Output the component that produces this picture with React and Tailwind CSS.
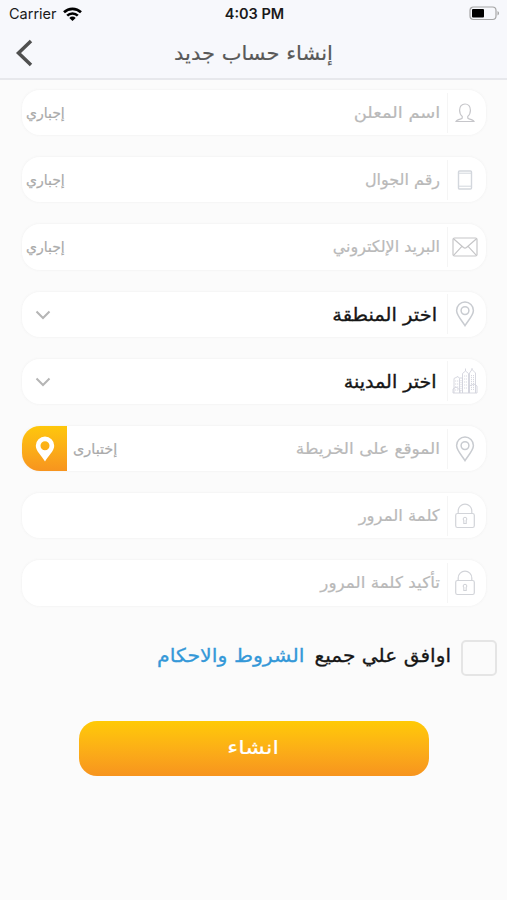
import clsx from "clsx";

function UserIcon() {
  return (
    <svg width="20" height="20" viewBox="0 0 20 20" fill="none" stroke="#c6c6ca" strokeWidth="1.2">
      <path d="M7.2 13.400C5.500 12 4.600 9.800 4.600 7.200C4.600 3.500 6.800 1 10 1s5.400 2.500 5.400 6.200c0 2.600-.9 4.800-2.600 6.200v1.800c0 .9 5.400 1 6.200 3.300H1c.8-2.300 6.200-2.400 6.200-3.300z" />
    </svg>
  );
}

function PhoneIcon() {
  return (
    <svg width="16" height="20" viewBox="0 0 16 20" fill="none" stroke="#d3d7dd" strokeWidth="1.400">
      <rect x="1.500" y="1" width="13" height="18" rx="1" />
      <path d="M1.500 3.200h13M1.500 16.200h13" strokeWidth="1" />
    </svg>
  );
}

function MailIcon() {
  return (
    <svg width="26" height="20" viewBox="0 0 26 20" fill="none" stroke="#c6c6c8" strokeWidth="1.2">
      <rect x="1" y="1" width="24" height="18" rx="1.5" />
      <path d="M1.5 1.8l10 8.7q1.5 1.2 3 0l10-8.7M1.6 18.4l8.3-9M24.4 18.4l-8.3-9" />
    </svg>
  );
}

function PinIcon() {
  return (
    <svg width="20" height="26" viewBox="0 0 20 26" fill="none" stroke="#c9ccd1" strokeWidth="1.5">
      <path d="M10 24.6C7.5 20.2 1.6 14.6 1.6 9.5a8.4 8.4 0 0 1 16.8 0c0 5.1-5.9 10.7-8.4 15.1z" />
      <circle cx="10" cy="9.6" r="3.9" />
    </svg>
  );
}

function CityIcon() {
  return (
    <svg width="26" height="26" viewBox="0 0 26 26" fill="none" stroke="#d3d4dc" strokeWidth=".9">
      <path d="M1 25h24M2 25V10.500l4-2 1.500 2V25M7.500 10h3v15M10.500 25V5.500l3-2.500 3 2.500V25M13.500 3V.5M17.500 25V5l2.500-3.500L23.500 5v20M20 2V0" />
      <path d="M3 13h3.500M3 16h3.500M3 19h3.500M3 22h3.500M9 12v11M12 8h3M12 11h3M12 14h3M12 17h3M12 20h3M19.500 7v15M21.500 7v15" strokeDasharray="1.200 .8" />
      <path d="M1 25v-4l3-2 4 3v3M17 25v-7l5-2 3 2v7" />
    </svg>
  );
}

function LockIcon() {
  return (
    <svg width="20" height="26" viewBox="0 0 20 26" fill="none" stroke="#d2d4d9" strokeWidth="1.2">
      <rect x=".7" y="10.500" width="18.600" height="14" rx="1.800" />
      <path d="M3.200 10.500V8a6.800 6.800 0 0 1 13.600 0v2.500" />
      <path d="M10 14.200a1.800 1.800 0 0 1 1.200 3.100v3.200H8.800v-3.200a1.800 1.800 0 0 1 1.200-3.100z" strokeWidth="1.100" />
    </svg>
  );
}

const fields = [
  { label: "اسم المعلن", Icon: UserIcon, note: "إجباري", stretch: "scale-x-[1.12]" },
  { label: "رقم الجوال", Icon: PhoneIcon, note: "إجباري" },
  { label: "البريد الإلكتروني", Icon: MailIcon, note: "إجباري" },
  { label: "اختر المنطقة", Icon: PinIcon, select: true, stretch: "scale-x-[1.08]" },
  { label: "اختر المدينة", Icon: CityIcon, select: true, stretch: "scale-x-[1.06]" },
  { label: "الموقع على الخريطة", Icon: PinIcon, note: "إختبارى", map: true, stretch: "scale-x-[1.06]" },
  { label: "كلمة المرور", Icon: LockIcon, stretch: "scale-x-[1.03]" },
  { label: "تأكيد كلمة المرور", Icon: LockIcon, stretch: "scale-x-[1.05]" },
];

function Field({ label, Icon, note, select, map, stretch }) {
  return (
    <div className="flex h-[45.2px] items-center overflow-hidden rounded-[18px] bg-white shadow-[0_0_2px_1px_#f5f5f5]">
      <div className="flex h-full w-[38px] shrink-0 items-center justify-center pr-[4px]">
        <Icon />
      </div>
      <div className="h-[40px] w-px shrink-0 bg-[#f5f5f5]" />
      <span
        className={clsx(
          "origin-right whitespace-nowrap",
          select
            ? "mr-[10px] text-[18px] text-[#161616] [-webkit-text-stroke:0.35px]"
            : "mr-[7px] text-[16px] text-[#b9b9b9] [-webkit-text-stroke:0.2px]",
          stretch
        )}
      >
        {label}
      </span>
      {select && (
        <svg className="mt-[2px] mr-auto ml-[13px]" width="16" height="10" viewBox="0 0 16 10" fill="none" stroke="#b5b5b5" strokeWidth="2">
          <path d="M1.500 1.500L8 8l6.500-6.500" />
        </svg>
      )}
      {note && (
        <span
          className={clsx(
            "mt-[2px] mr-auto origin-left text-[14px] whitespace-nowrap text-[#aaaaaa] [-webkit-text-stroke:0.2px]",
            map ? "ml-[6px] scale-x-[1.03]" : "ml-[4px]"
          )}
        >
          {note}
        </span>
      )}
      {map && (
        <button className="flex h-full w-[45px] shrink-0 items-center justify-center bg-linear-to-b from-[#fec70a] to-[#f7941e]">
          <svg width="20" height="26" viewBox="0 0 20 26" fill="#fff">
            <path fillRule="evenodd" d="M10 .5a9.200 9.200 0 0 0-9.200 9.200C.8 15 7 20 10 25.500 13 20 19.200 15 19.200 9.700A9.200 9.200 0 0 0 10 .5zm0 4.800a4.500 4.500 0 1 1 0 9 4.500 4.500 0 0 1 0-9z" />
          </svg>
        </button>
      )}
    </div>
  );
}

function StatusBar() {
  return (
    <div className="grid h-[27px] grid-cols-3 items-center pr-[7px] pl-[9px] font-['Inter',sans-serif] text-[14.500px] text-[#1a1a1a]">
      <div className="flex items-center gap-[6px]">
        <span>Carrier</span>
        <svg width="19" height="14" viewBox="0 0 19 14" fill="none" stroke="#000" strokeWidth="2.600">
          <path d="M1 5.300a12.200 12.200 0 0 1 17 0M4.200 8.700a7.500 7.500 0 0 1 10.600 0" />
          <path d="M6.300 10.900a4.600 4.600 0 0 1 6.400 0L9.500 14z" fill="#000" stroke="none" />
        </svg>
      </div>
      <span className="text-center font-semibold">4:03 PM</span>
      <svg className="justify-self-end" width="31" height="15" viewBox="0 0 31 15" fill="none">
        <rect x="1" y="1" width="26" height="12.500" rx="3.500" stroke="#a6a6a6" strokeWidth="1.200" />
        <rect x="3" y="3" width="12" height="8.500" rx="1" fill="#000" />
        <path d="M28.500 5c2 .8 2 3.700 0 4.500z" fill="#a6a6a6" />
      </svg>
    </div>
  );
}

export default function App() {
  return (
    <div className="h-[900px] w-[507px] overflow-hidden bg-[#fbfbfb] font-['DejaVu_Sans',sans-serif]">
      <header className="h-[80px] border-b-2 border-[#e7e8ec] bg-[#f7f8fc]">
        <StatusBar />
        <div className="grid h-[51px] grid-cols-[60px_1fr_60px] items-center">
          <svg className="ml-[15px]" width="19" height="28" viewBox="0 0 19 28" fill="none" stroke="#505050" strokeWidth="3.500">
            <path d="M16 2L3.500 14 16 26" />
          </svg>
          <h1 dir="rtl" className="scale-x-[1.05] text-center text-[20px] text-[#585858] [-webkit-text-stroke:0.2px]">
            إنشاء حساب جديد
          </h1>
        </div>
      </header>

      <form dir="rtl" className="pt-[10px] pr-[21px] pl-[22px]">
        <div className="flex flex-col gap-[22px]">
          {fields.map((field) => (
            <Field key={field.label} {...field} />
          ))}
        </div>
      </form>

      <div dir="rtl" className="mt-[34px] flex h-[36px] items-center pr-[10px] whitespace-nowrap">
        <span className="h-[36px] w-[36px] shrink-0 rounded-[5px] border-2 border-[#e5e5e5]" />
        <span className="mr-[10px] mb-[4px] w-[136px] origin-right scale-x-[1.06] text-[19px] text-[#161616] [-webkit-text-stroke:0.3px]">
          اوافق علي جميع
        </span>
        <a className="mr-[11px] mb-[4px] origin-right scale-x-[1.08] text-[19px] text-[#3498d8] [-webkit-text-stroke:0.3px]">
          الشروط والاحكام
        </a>
      </div>

      <button className="mx-auto mt-[45px] flex h-[55px] w-[350px] items-center justify-center rounded-[18px] bg-linear-to-b from-[#ffca05] to-[#f7941e] pb-[2px] text-[19px] text-white">
        <span className="scale-x-[1.22] [-webkit-text-stroke:0.2px]">انشاء</span>
      </button>
    </div>
  );
}
